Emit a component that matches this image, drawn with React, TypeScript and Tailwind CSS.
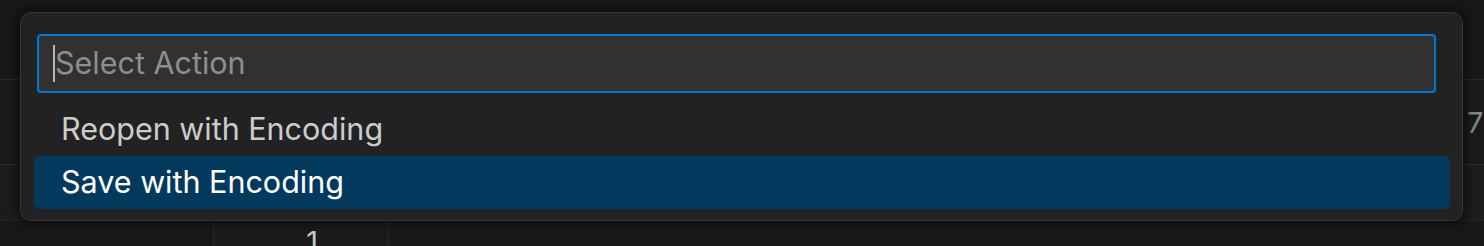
import React from "react";

export default function App() {
  return (
    <div className="relative w-[1484px] h-[246px] overflow-hidden bg-[#181818] font-['Inter','Noto_Sans',sans-serif]">
      {/* background editor */}
      <div className="flex flex-col h-full">
        <div className="h-[80px] shrink-0 border-b border-[#2b2b2b]" />
        <div className="h-[85px] shrink-0 border-b border-[#2b2b2b] bg-[#1a1a1a] flex items-center justify-end">
          <span className="w-[17px] overflow-hidden whitespace-nowrap text-[29px] leading-none text-[#858585]">
            78
          </span>
        </div>
        <div className="h-[56px] shrink-0 border-b border-dotted border-[#2b2b2b] bg-[#1c1c1c]" />
        <div className="flex flex-1">
          <div className="w-[213px] shrink-0" />
          <div className="w-[176px] shrink-0 border-x border-[#262626] bg-[#1b1b1b] flex justify-end pr-[70px] pt-[6px]">
            <span className="text-[29px] leading-none text-[#c8c8c8]">1</span>
          </div>
          <div className="flex-1" />
        </div>
      </div>

      {/* quick pick overlay */}
      <div className="absolute left-[20px] top-[12px] w-[1443px] h-[209px] rounded-[11px] border border-[#353535] bg-[#222222] shadow-[0_0_10px_4px_rgba(0,0,0,0.45)] pt-[21px] pb-[11px] flex flex-col">
        <div className="ml-[16px] w-[1399px] h-[59px] rounded-[4px] border-2 border-[#0078d4] bg-[#313131] flex items-center pl-[14px]">
          <div className="w-[2px] h-[37px] bg-[#b8b8b8]" />
          <span className="text-[30.5px] text-[#8e8e8e] leading-none">Select Action</span>
        </div>
        <div className="mt-[10px] ml-[13px] w-[1416px] flex flex-col">
          <div className="h-[53px] flex items-center pl-[27px] text-[30.5px] text-[#cccccc] leading-none">
            Reopen with Encoding
          </div>
          <div className="h-[53px] flex items-center pl-[27px] rounded-[5px] bg-[#04395e] text-[30.5px] text-white leading-none">
            Save with Encoding
          </div>
        </div>
      </div>
    </div>
  );
}
